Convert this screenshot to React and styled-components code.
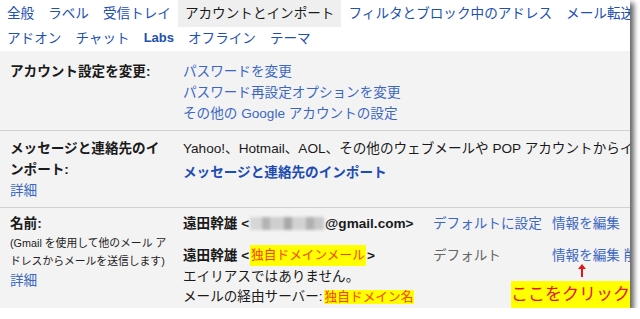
import React from "react";
import styled, { createGlobalStyle } from "styled-components";

const GlobalStyle = createGlobalStyle`
  html, body {
    margin: 0;
    padding: 0;
    background: #ffffff;
  }
  body {
    font-family: "Liberation Sans", "Noto Sans CJK JP", sans-serif;
    color: #1a1a1a;
  }
`;

const Panel = styled.div`
  position: relative;
  width: 630px;
  height: 308px;
  overflow: hidden;
  background: #f3f3f3;
  box-shadow: 4px 3px 5px rgba(0, 0, 0, 0.6);
`;

const Tabs = styled.div`
  background: #ffffff;
  display: flex;
  flex-direction: column;
`;

const TabRow = styled.div`
  display: flex;
  white-space: nowrap;
  height: ${(p) => p.$h}px;
`;

const Tab = styled.span`
  padding: 0 7px;
  font-size: 13.6px;
  line-height: ${(p) => p.$h}px;
  color: ${(p) => (p.$active ? "#1a1a1a" : "#2150b3")};
  background: ${(p) => (p.$active ? "#efefef" : "transparent")};
  ${(p) => p.$latin && "font-weight: bold; font-size: 13px; line-height: 22px;"}
`;

const Section = styled.div`
  display: grid;
  grid-template-columns: 173px 1fr;
  padding: ${(p) => p.$pad};
  border-bottom: ${(p) => (p.$last ? "none" : "1px solid #d2d2d2")};
  font-size: 13.6px;
  line-height: 21px;
`;

const Label = styled.div`
  display: flex;
  flex-direction: column;
`;

const LabelTitle = styled.span`
  font-weight: bold;
  color: #1a1a1a;
`;

const SmallNote = styled.span`
  font-size: 10.8px;
  line-height: 18px;
  color: #222;
`;

const Link = styled.span`
  color: ${(p) => (p.$strong ? "#1d4cb3" : "#3b67c3")};
  font-weight: ${(p) => (p.$strong ? "bold" : "normal")};
  white-space: nowrap;
  margin-top: ${(p) => p.$mt || 0}px;
`;

const Column = styled.div`
  display: flex;
  flex-direction: column;
  white-space: nowrap;
`;

const Plain = styled.span`
  color: #1a1a1a;
  margin-top: ${(p) => p.$mt || 0}px;
  line-height: ${(p) => p.$lh || 21}px;
`;

const AddrGrid = styled.div`
  display: grid;
  grid-template-columns: 250px 119px auto;
  row-gap: 11px;
  white-space: nowrap;
`;

const Addr = styled.span`
  font-weight: bold;
  color: #1a1a1a;
  display: flex;
  align-items: center;
`;

const Blur = styled.span`
  display: inline-block;
  width: 74px;
  height: 13px;
  margin: 0 1px;
  background: linear-gradient(
    90deg,
    #d6d6d6 0 12px,
    #b4b4b4 12px 20px,
    #cfcfcf 20px 34px,
    #a8a8a8 34px 42px,
    #d2d2d2 42px 56px,
    #b0b0b0 56px 64px,
    #c8c8c8 64px
  );
  filter: blur(1.5px);
`;

const Mark = styled.span`
  background: #ffff00;
  color: #ff3d00;
  font-weight: normal;
  font-size: 12.7px;
  padding: 0 1px;
  margin: 0 1px;
`;

const Muted = styled.span`
  color: #666;
`;

const Callout = styled.div`
  position: absolute;
  left: 511px;
  top: 281px;
  width: 119px;
  height: 27px;
  background: #ffff00;
  color: #e5141b;
  font-size: 17px;
  line-height: 27px;
  text-align: center;
  white-space: nowrap;
`;

const Arrow = styled.svg`
  position: absolute;
  left: 577px;
  top: 263px;
`;

export default function App() {
  return (
    <>
      <GlobalStyle />
      <Panel>
        <Tabs>
          <TabRow $h={27}>
            <Tab $h={27}>全般</Tab>
            <Tab $h={27}>ラベル</Tab>
            <Tab $h={27}>受信トレイ</Tab>
            <Tab $h={27} $active>アカウントとインポート</Tab>
            <Tab $h={27}>フィルタとブロック中のアドレス</Tab>
            <Tab $h={27}>メール転送</Tab>
          </TabRow>
          <TabRow $h={24}>
            <Tab $h={24}>アドオン</Tab>
            <Tab $h={24}>チャット</Tab>
            <Tab $h={24} $latin>Labs</Tab>
            <Tab $h={24}>オフライン</Tab>
            <Tab $h={24}>テーマ</Tab>
          </TabRow>
        </Tabs>

        <Section $pad="10px 0 6px 10px">
          <Label>
            <LabelTitle>アカウント設定を変更:</LabelTitle>
          </Label>
          <Column>
            <Link>パスワードを変更</Link>
            <Link>パスワード再設定オプションを変更</Link>
            <Link>その他の Google アカウントの設定</Link>
          </Column>
        </Section>

        <Section $pad="7px 0 6px 10px">
          <Label>
            <LabelTitle>メッセージと連絡先のイ</LabelTitle>
            <LabelTitle>ンポート:</LabelTitle>
            <Link>詳細</Link>
          </Label>
          <Column>
            <Plain>Yahoo!、Hotmail、AOL、その他のウェブメールや POP アカウントからイ</Plain>
            <Link $strong $mt={3}>メッセージと連絡先のインポート</Link>
          </Column>
        </Section>

        <Section $pad="5px 0 0 10px" $last>
          <Label>
            <LabelTitle>名前:</LabelTitle>
            <SmallNote>(Gmail を使用して他のメール ア</SmallNote>
            <SmallNote>ドレスからメールを送信します)</SmallNote>
            <Link>詳細</Link>
          </Label>
          <Column>
            <AddrGrid>
              <Addr>
                遠田幹雄 &lt;<Blur />@gmail.com&gt;
              </Addr>
              <Link>デフォルトに設定</Link>
              <Link>情報を編集</Link>
              <Addr>
                遠田幹雄 &lt;<Mark>独自ドメインメール</Mark>&gt;
              </Addr>
              <Muted>デフォルト</Muted>
              <Link>情報を編集 削</Link>
            </AddrGrid>
            <Plain $mt={1} $lh={20}>エイリアスではありません。</Plain>
            <Plain $lh={20}>
              メールの経由サーバー:<Mark>独自ドメイン名</Mark>
            </Plain>
          </Column>
        </Section>

        <Arrow width="10" height="15" viewBox="0 0 10 15">
          <path d="M5 1 L1 6 L4 6 L4 14 L6 14 L6 6 L9 6 Z" fill="#e5141b" />
        </Arrow>
        <Callout>ここをクリック</Callout>
      </Panel>
    </>
  );
}
